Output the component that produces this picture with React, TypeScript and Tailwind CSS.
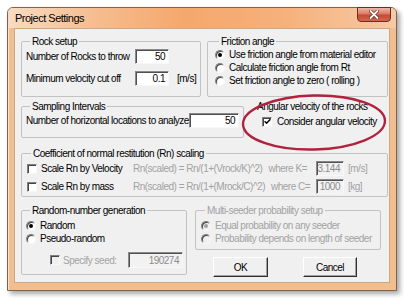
import React from "react";

const FONT = "font-['Liberation_Sans',Arial,sans-serif]";

function Radio({ checked, disabled }: { checked?: boolean; disabled?: boolean }) {
  return (
    <span
      className={`flex h-[10px] w-[10px] shrink-0 items-center justify-center rounded-full border border-t-[#808080] border-l-[#808080] border-r-[#f8f8f8] border-b-[#f8f8f8] shadow-[inset_1px_1px_0_#444] ${
        disabled ? "bg-[#f0f0f0]" : "bg-white"
      }`}
    >
      {checked && <span className={`h-[4px] w-[4px] rounded-full ${disabled ? "bg-[#a0a0a0]" : "bg-black"}`} />}
    </span>
  );
}

function Check({ checked, disabled }: { checked?: boolean; disabled?: boolean }) {
  return (
    <span
      className={`flex h-[10px] w-[10px] shrink-0 items-center justify-center border border-t-[#808080] border-l-[#808080] border-r-[#f8f8f8] border-b-[#f8f8f8] shadow-[inset_1px_1px_0_#444] ${
        disabled ? "bg-[#f0f0f0]" : "bg-white"
      }`}
    >
      {checked && (
        <svg width="7" height="7" viewBox="0 0 7 7">
          <path d="M0.6 3.2 L2.6 5.2 L6.4 1.2" stroke="#000" strokeWidth="1.5" fill="none" />
        </svg>
      )}
    </span>
  );
}

function Field({
  value,
  width,
  height = "h-[15px]",
  disabled,
  extra = "",
}: {
  value: string;
  width: string;
  height?: string;
  disabled?: boolean;
  extra?: string;
}) {
  return (
    <div
      className={`flex shrink-0 items-center justify-end border border-t-[#8a8a8a] border-l-[#8a8a8a] border-r-[#f8f8f8] border-b-[#f8f8f8] pr-[3px] shadow-[inset_1px_1px_0_#505050] ${width} ${height} ${extra} ${
        disabled ? "bg-[#f2f2f2] text-[#8c8c8c]" : "bg-white text-black"
      }`}
    >
      {value}
    </div>
  );
}

function RadioRow({ label, checked, disabled }: { label: string; checked?: boolean; disabled?: boolean }) {
  return (
    <div className={`flex h-[13px] items-center gap-[4px] ${disabled ? "text-[#a2a2a2]" : "text-black"}`}>
      <Radio checked={checked} disabled={disabled} />
      <span className="whitespace-nowrap">{label}</span>
    </div>
  );
}

function Group({
  label,
  className = "",
  disabled,
  children,
}: {
  label: string;
  className?: string;
  disabled?: boolean;
  children?: React.ReactNode;
}) {
  return (
    <fieldset className={`min-w-0 shrink-0 rounded-[2px] border border-[#c2c2c2] ${className}`}>
      <legend
        className={`ml-[4px] px-[2px] text-[10px] leading-[13px] whitespace-nowrap ${
          disabled ? "text-[#a2a2a2]" : "text-black"
        }`}
      >
        {label}
      </legend>
      {children}
    </fieldset>
  );
}

function Button({ label, width }: { label: string; width: string }) {
  return (
    <div
      className={`flex h-[20px] items-center justify-center border border-t-white border-l-white border-r-[#303030] border-b-[#303030] bg-[#f0f0f0] shadow-[inset_-1px_-1px_0_#a0a0a0] ${width}`}
    >
      {label}
    </div>
  );
}

export default function App() {
  return (
    <div className={`relative h-[298px] w-[404px] overflow-hidden bg-white text-black ${FONT}`}>
      <div className="ml-[7px] mt-[7px] flex h-[284px] w-[390px] flex-col rounded-t-[6px] border border-[#7a6350] bg-[#f2be90] shadow-[inset_1px_1px_0_#fbe2c8,3px_3px_5px_rgba(0,0,0,0.35)]">
        {/* Title bar */}
        <div className="flex h-[20px] items-start rounded-t-[5px] bg-[linear-gradient(90deg,#f7dcc4_0%,#f6bd90_22%,#f5a86d_45%,#f6b07a_70%,#f5caa6_100%)]">
          <span className="pl-[7px] pt-[3px] text-[11px] leading-[14px] tracking-[-0.5px] whitespace-nowrap">
            Project Settings
          </span>
          <div className="ml-auto mr-[5px] -mt-[1px] flex h-[15px] w-[34px] items-center justify-center rounded-b-[4px] border border-[#6e2c20] bg-[linear-gradient(180deg,#ecb8aa_0%,#dc7a66_45%,#c54a34_55%,#d2664f_100%)]">
            <svg width="10" height="9" viewBox="0 0 10 9">
              <path d="M1.5 1 L8.5 8 M8.5 1 L1.5 8" stroke="#5a2418" strokeWidth="3.2" strokeLinecap="round" />
              <path d="M1.5 1 L8.5 8 M8.5 1 L1.5 8" stroke="#ffffff" strokeWidth="1.8" strokeLinecap="round" />
            </svg>
          </div>
        </div>

        {/* Client area */}
        <div className="mx-[6px] mb-[7px] flex flex-1 flex-col border border-[#cfa882] bg-[#f0f0f0] pl-[6px] pr-[1px] pt-[6px] text-[10px] leading-[13px] tracking-[-0.5px]">
          {/* Row 1 */}
          <div className="flex h-[62px] gap-[6px]">
            <Group label="Rock setup" className="w-[180px] pl-[4px]">
              <div className="mt-[1px] flex h-[15px] items-center">
                <span className="w-[109px] shrink-0 whitespace-nowrap">Number of Rocks to throw</span>
                <Field value="50" width="w-[34px]" />
              </div>
              <div className="mt-[7px] flex h-[15px] items-center">
                <span className="w-[109px] shrink-0 whitespace-nowrap">Minimum velocity cut off</span>
                <Field value="0.1" width="w-[34px]" />
                <span className="ml-[8px]">[m/s]</span>
              </div>
            </Group>
            <Group label="Friction angle" className="flex-1 pl-[7px]">
              <RadioRow checked label="Use friction angle from material editor" />
              <RadioRow label="Calculate friction angle from Rt" />
              <RadioRow label="Set friction angle to zero ( rolling )" />
            </Group>
          </div>

          {/* Row 2 */}
          <div className="mt-[3px] flex h-[38px]">
            <Group label="Sampling Intervals" className="w-[223px] pl-[4px] pr-[4px]">
              <div className="flex h-[15px] items-center">
                <span className="whitespace-nowrap">Number of horizontal locations to analyze</span>
                <Field value="50" width="w-[50px]" extra="ml-auto" />
              </div>
            </Group>
            <div className="min-w-0 flex-1 pl-[13px]">
              <div className="whitespace-nowrap">Angular velocity of the rocks</div>
              <div className="mt-[2px] flex h-[13px] items-center gap-[5px] pl-[5px]">
                <Check checked />
                <span className="whitespace-nowrap">Consider angular velocity</span>
              </div>
            </div>
          </div>

          {/* Row 3 */}
          <div className="mt-[9px] flex h-[50px]">
            <Group label="Coefficient of normal restitution (Rn) scaling" className="flex-1 pl-[5px]">
              <div className="mt-[1px] flex h-[15px] items-center">
                <Check />
                <span className="ml-[4px] w-[92px] shrink-0 whitespace-nowrap">Scale Rn by Velocity</span>
                <span className="w-[183px] shrink-0 whitespace-nowrap text-[#a2a2a2]">
                  Rn(scaled) = Rn/(1+(Vrock/K)^2)<span className="ml-[6px]">where K=</span>
                </span>
                <Field value="3.144" width="w-[28px]" disabled />
                <span className="ml-[4px] text-[#a2a2a2]">[m/s]</span>
              </div>
              <div className="mt-[3px] flex h-[15px] items-center">
                <Check />
                <span className="ml-[4px] w-[92px] shrink-0 whitespace-nowrap">Scale Rn by mass</span>
                <span className="w-[183px] shrink-0 whitespace-nowrap text-[#a2a2a2]">
                  Rn(scaled) = Rn/(1+(Mrock/C)^2)<span className="ml-[6px]">where C=</span>
                </span>
                <Field value="1000" width="w-[28px]" disabled />
                <span className="ml-[4px] text-[#a2a2a2]">[kg]</span>
              </div>
            </Group>
          </div>

          {/* Row 4 */}
          <div className="mt-[7px] flex gap-[8px]">
            <Group label="Random-number generation" className="h-[71px] w-[166px] pl-[4px] pr-[3px] pt-[2px]">
              <RadioRow checked label="Random" />
              <RadioRow label="Pseudo-random" />
              <div className="mt-[7px] flex h-[16px] items-center">
                <span className="ml-[24px]">
                  <Check disabled />
                </span>
                <span className="ml-[3px] whitespace-nowrap text-[#a2a2a2]">Specify seed:</span>
                <Field value="190274" width="w-[55px]" height="h-[16px]" disabled extra="ml-auto" />
              </div>
            </Group>
            <div className="flex w-[186px] shrink-0 flex-col">
              <Group label="Multi-seeder probability setup" disabled className="h-[46px] pl-[5px] pt-[2px]">
                <RadioRow checked disabled label="Equal probability on any seeder" />
                <RadioRow disabled label="Probability depends on length of seeder" />
              </Group>
              <div className="mt-[7px] flex gap-[35px] pl-[18px]">
                <Button label="OK" width="w-[55px]" />
                <Button label="Cancel" width="w-[54px]" />
              </div>
            </div>
          </div>
        </div>
      </div>

      {/* Red hand-drawn annotation ellipse */}
      <svg className="absolute left-[241px] top-[93px]" width="148" height="60" viewBox="0 0 148 60">
        <ellipse cx="73" cy="29.5" rx="71" ry="27" fill="none" stroke="#b0223e" strokeWidth="2.4" transform="rotate(-1.5 73 29.5)" />
      </svg>
    </div>
  );
}
